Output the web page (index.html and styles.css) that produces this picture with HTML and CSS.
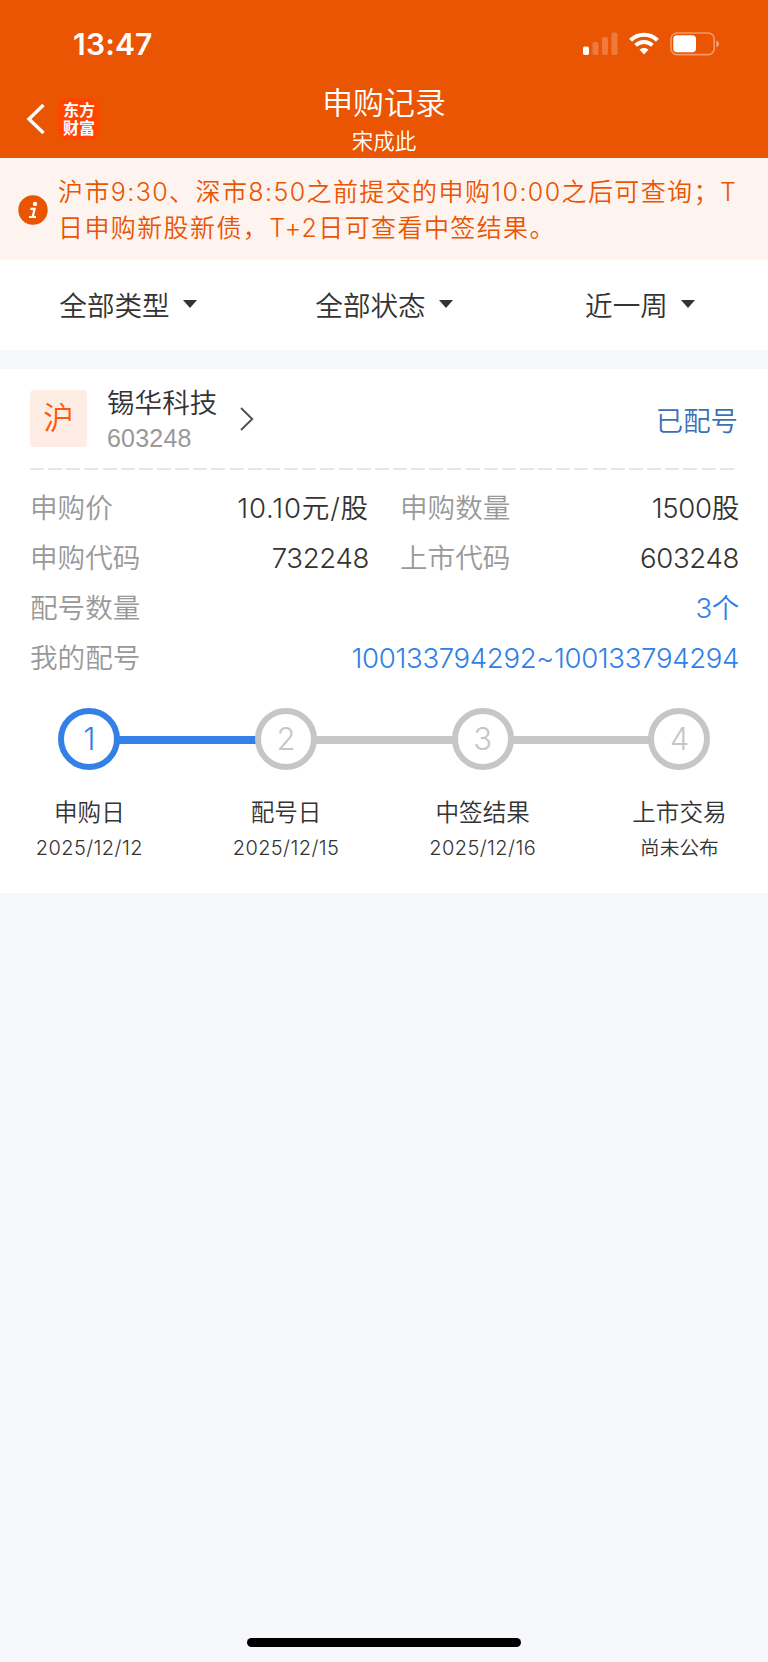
FILE: index.html
```
<!DOCTYPE html>
<html lang="zh-CN">
<head>
    <meta charset="UTF-8">
    <meta name="viewport" content="width=device-width, initial-scale=1.0">
    <title>申购记录</title>
    <link rel="stylesheet" href="styles.css">
</head>
<body>
    <header class="header">
        <div class="status-bar">
            <span class="time">13:47</span>
            <div class="status-icons">
                <svg class="signal" width="36" height="24" viewBox="0 0 36 24" fill="#fff">
                    <rect x="0" y="14.5" width="6" height="8.5" rx="1.8"/>
                    <rect x="9.5" y="10" width="6" height="13" rx="1.8" opacity="0.22"/>
                    <rect x="19" y="5" width="6" height="18" rx="1.8" opacity="0.22"/>
                    <rect x="28.5" y="0.5" width="6" height="22.5" rx="1.8" opacity="0.22"/>
                </svg>
                <svg class="wifi" width="30" height="24" viewBox="0 0 30 24" fill="none" stroke="#fff">
                    <path d="M1.6 8.3 C9 0.9 21 0.9 28.4 8.3" stroke-width="4.2"/>
                    <path d="M6.6 13.4 C11.3 9 18.7 9 23.4 13.4" stroke-width="4"/>
                    <path d="M10.4 17.6 C13 15.4 17 15.4 19.6 17.6 L15 22.4 Z" fill="#fff" stroke="none"/>
                </svg>
                <svg class="battery" width="50" height="24" viewBox="0 0 50 24" fill="none">
                    <rect x="1" y="1" width="43.2" height="21.6" rx="6" stroke="#fff" stroke-opacity="0.4" stroke-width="1.6"/>
                    <rect x="3.3" y="3.3" width="22.7" height="17" rx="3.8" fill="#fff"/>
                    <path d="M46.4 8.6 C49.8 10 49.8 14 46.4 15.2 Z" fill="#fff" fill-opacity="0.5"/>
                </svg>
            </div>
        </div>
        <nav class="nav">
            <div class="nav-left">
                <svg class="back" width="20" height="34" viewBox="0 0 20 34" fill="none" stroke="#fff" stroke-width="3.4">
                    <path d="M17.5 3 L3 17 L17.5 31"/>
                </svg>
                <div class="logo">东方<br>财富</div>
            </div>
            <div class="nav-title">
                <h1>申购记录</h1>
                <p>宋成此</p>
            </div>
        </nav>
    </header>

    <section class="notice">
        <svg class="info" width="30" height="30" viewBox="0 0 30 30">
            <circle cx="15" cy="15" r="14.7" fill="#ea5504"/>
            <circle cx="17" cy="8.9" r="2.2" fill="#fff"/>
            <path d="M12.3 13.8 H16.6 L14.8 21.6 M11 22 H18" fill="none" stroke="#fff" stroke-width="2.2"/>
        </svg>
        <p>沪市9:30、深市8:50之前提交的申购10:00之后可查询；T<br>日申购新股新债，T+2日可查看中签结果。</p>
    </section>

    <section class="filters">
        <div class="filter">全部类型<i class="caret"></i></div>
        <div class="filter">全部状态<i class="caret"></i></div>
        <div class="filter">近一周<i class="caret"></i></div>
    </section>

    <main class="card">
        <div class="stock">
            <div class="market">沪</div>
            <div class="stock-name">
                <h2>锡华科技</h2>
                <p>603248</p>
            </div>
            <svg class="arrow" width="16" height="26" viewBox="0 0 16 26" fill="none" stroke="#555" stroke-width="2">
                <path d="M2 2 L13.2 13 L2 24"/>
            </svg>
            <span class="state">已配号</span>
        </div>
        <div class="divider"></div>

        <div class="info-grid">
            <div class="item"><span class="label">申购价</span><span class="value price">10.10元/股</span></div>
            <div class="item"><span class="label">申购数量</span><span class="value">1500股</span></div>
            <div class="item"><span class="label">申购代码</span><span class="value">732248</span></div>
            <div class="item"><span class="label">上市代码</span><span class="value">603248</span></div>
            <div class="item wide"><span class="label">配号数量</span><span class="value blue">3个</span></div>
            <div class="item wide"><span class="label">我的配号</span><span class="value blue">100133794292~100133794294</span></div>
        </div>

        <div class="steps">
            <div class="step active">
                <div class="circle">1</div>
                <h3>申购日</h3>
                <p>2025/12/12</p>
            </div>
            <div class="step">
                <div class="circle">2</div>
                <h3>配号日</h3>
                <p>2025/12/15</p>
            </div>
            <div class="step">
                <div class="circle">3</div>
                <h3>中签结果</h3>
                <p>2025/12/16</p>
            </div>
            <div class="step">
                <div class="circle">4</div>
                <h3>上市交易</h3>
                <p>尚未公布</p>
            </div>
        </div>
    </main>

    <footer class="footer">
        <div class="home-bar"></div>
    </footer>
</body>
</html>
```
FILE: styles.css
```
* {
    margin: 0;
    padding: 0;
    box-sizing: border-box;
}

body {
    display: flex;
    flex-direction: column;
    min-height: 1662px;
    font-family: Inter, "Noto Sans CJK SC", sans-serif;
    font-weight: 350;
    background: #f6f8fb;
    color: #333;
}

h1, h2, h3 {
    font-weight: 350;
}

svg {
    display: block;
    flex: none;
}

/* header */
.header {
    height: 158px;
    background: #ea5504;
    color: #fff;
}

.status-bar {
    display: flex;
    justify-content: space-between;
    align-items: center;
    height: 87px;
    padding: 0 48px 0 73px;
}

.time {
    font-size: 30px;
    font-weight: 600;
    letter-spacing: 0.2px;
}

.status-icons {
    display: flex;
    align-items: center;
    gap: 10px;
}

.battery {
    margin-left: 1px;
}

.nav {
    display: grid;
    grid-template-columns: 1fr auto 1fr;
    height: 71px;
    padding: 0 26px;
}

.nav-left {
    display: flex;
    align-items: center;
    gap: 12px;
    height: 64px;
}

.logo {
    width: 42px;
    height: 42px;
    padding-top: 3px;
    border-radius: 10px;
    background: #ff4500;
    font-size: 16px;
    font-weight: 700;
    line-height: 18px;
    text-align: center;
}

.nav-title {
    text-align: center;
}

.nav-title h1 {
    font-size: 30.9px;
    line-height: 32px;
}

.nav-title p {
    margin-top: 8px;
    font-size: 21.5px;
    line-height: 28px;
}

/* notice */
.notice {
    display: flex;
    align-items: center;
    gap: 10px;
    height: 102px;
    padding: 1px 0 0 18px;
    background: #fdf3ef;
    color: #ea5504;
    font-size: 25px;
    line-height: 36px;
    letter-spacing: 1.4px;
    white-space: nowrap;
}

/* filters */
.filters {
    display: grid;
    grid-template-columns: repeat(3, 1fr);
    height: 90px;
    padding-bottom: 2px;
    background: #fff;
}

.filter {
    display: flex;
    justify-content: center;
    align-items: center;
    gap: 13px;
    font-size: 27.6px;
}

.caret {
    border: 7px solid transparent;
    border-top: 8px solid #333;
    border-bottom: none;
}

/* card */
.card {
    height: 524px;
    margin-top: 19px;
    padding: 21px 30px 0;
    background: #fff;
}

.stock {
    display: flex;
    align-items: center;
    height: 57px;
}

.market {
    width: 57px;
    height: 57px;
    border-radius: 4px;
    background: #fdede5;
    color: #fa5a0a;
    font-size: 30.5px;
    line-height: 56px;
    text-align: center;
}

.stock-name {
    margin: 2px 22px 0 20px;
}

.stock-name h2 {
    font-size: 27.6px;
    line-height: 36px;
}

.stock-name p {
    color: #999;
    font-family: "Liberation Sans", sans-serif;
    font-size: 25px;
    line-height: 34px;
    letter-spacing: 0.2px;
}

.state {
    margin-left: auto;
    color: #4070b4;
    font-size: 27.4px;
}

.divider {
    height: 2px;
    margin-top: 21px;
    background: repeating-linear-gradient(90deg, #e6e6e6 0 14px, transparent 14px 18.15px);
}

.info-grid {
    display: grid;
    grid-template-columns: 338px 338px;
    column-gap: 32px;
    margin-top: 13px;
    font-size: 27.6px;
    line-height: 50px;
}

.item {
    display: flex;
    justify-content: space-between;
}

.wide {
    grid-column: 1 / 3;
}

.label {
    color: #999;
}

.value {
    margin-right: -1px;
    letter-spacing: -0.35px;
}

.price {
    letter-spacing: 0.8px;
}

.blue {
    color: #2f80e7;
}

/* steps */
.steps {
    display: grid;
    grid-template-columns: repeat(4, 196.7px);
    margin: 25px 0 0 -39px;
}

.step {
    position: relative;
    text-align: center;
}

.circle {
    width: 62px;
    height: 62px;
    margin: 0 auto;
    border: 6px solid #c6c6c6;
    border-radius: 50%;
    color: #c6c6c6;
    font-size: 31px;
    font-weight: 300;
    line-height: 50px;
}

/* line to the next step */
.step:not(:last-child)::after {
    content: "";
    position: absolute;
    top: 28px;
    left: calc(50% + 29px);
    width: 138px;
    height: 8px;
    background: #c6c6c6;
}

.active .circle {
    border-color: #3381e6;
    color: #3381e6;
}

.step.active::after {
    background: #3381e6;
}

.step h3 {
    margin-top: 26px;
    font-size: 23.6px;
    line-height: 34px;
}

.step p {
    margin-top: 3px;
    font-size: 20px;
    line-height: 30px;
    letter-spacing: 0.4px;
}

.step:last-child p {
    font-size: 19.7px;
    letter-spacing: 0;
}

.footer {
    margin-top: auto;
    padding-bottom: 15px;
}

.home-bar {
    width: 274px;
    height: 9px;
    margin: 0 auto;
    border-radius: 5px;
    background: #000;
}
```
